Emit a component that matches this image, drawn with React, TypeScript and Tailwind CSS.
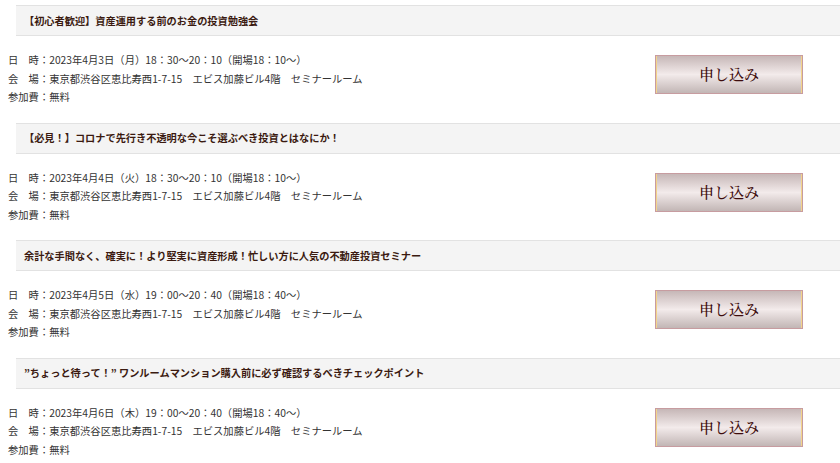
const SEMINARS = [
  {
    title: '【初心者歓迎】資産運用する前のお金の投資勉強会',
    date: '2023年4月3日（月）18：30〜20：10（開場18：10〜）',
  },
  {
    title: '【必見！】コロナで先行き不透明な今こそ選ぶべき投資とはなにか！',
    date: '2023年4月4日（火）18：30〜20：10（開場18：10〜）',
  },
  {
    title: '余計な手間なく、確実に！より堅実に資産形成！忙しい方に人気の不動産投資セミナー',
    date: '2023年4月5日（水）19：00〜20：40（開場18：40〜）',
  },
  {
    title: '”ちょっと待って！” ワンルームマンション購入前に必ず確認するべきチェックポイント',
    date: '2023年4月6日（木）19：00〜20：40（開場18：40〜）',
  },
];

const PLACE = '東京都渋谷区恵比寿西1-7-15　エビス加藤ビル4階　セミナールーム';

export default function App() {
  return (
    <div
      className="min-h-screen bg-white pt-[5px]"
      style={{ fontFamily: '"Noto Sans CJK JP", "Noto Sans", sans-serif' }}
    >
      {SEMINARS.map((s) => (
        <SeminarRow key={s.title} title={s.title} date={s.date} />
      ))}
    </div>
  );
}

function SeminarRow({ title, date }: { title: string; date: string }) {
  return (
    <section>
      {/* Title bar */}
      <div className="ml-4 h-[31px] border-y border-[#e2e2e2] bg-[#f4f4f4] pl-2 flex items-center">
        <h3 className="text-[10.2px] font-bold text-[#3b1a10]">{title}</h3>
      </div>

      {/* Details */}
      <div className="flex items-start justify-between pl-2 pr-[37px] pt-[15px] pb-4">
        <div className="text-[10.3px] leading-[18.5px] text-[#333]">
          <p>日　時：{date}</p>
          <p>会　場：{PLACE}</p>
          <p>参加費：無料</p>
        </div>
        <button
          className="mt-[4px] w-[148px] h-[39px] border border-[#c79ca0] bg-gradient-to-b from-[#c6b7b7] via-[#f3ebeb] to-[#c2b6b5] text-[15px] font-medium text-[#3e0c0c] shadow-[inset_1px_0_0_#f2d48a,inset_-1px_0_0_#f2d48a]"
          style={{ fontFamily: '"Noto Serif CJK JP", "Noto Sans CJK JP", serif' }}
        >
          申し込み
        </button>
      </div>
    </section>
  );
}
